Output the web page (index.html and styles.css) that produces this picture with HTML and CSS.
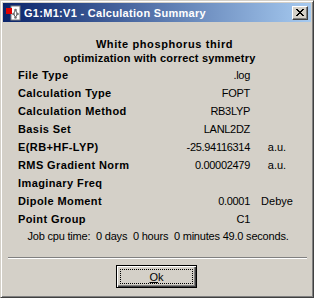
FILE: index.html
```html
<!DOCTYPE html>
<html lang="en">
<head>
  <meta charset="UTF-8" />
  <title>G1:M1:V1 - Calculation Summary</title>
  <link rel="stylesheet" href="styles.css">
</head>
<body>
  <div class="window">
    <div class="titlebar">
      <svg class="app-icon" width="16" height="16" viewBox="0 0 16 16">
        <rect x="6" y="1" width="9" height="14" fill="#fff" stroke="#808080" stroke-width="1"/>
        <rect x="1" y="3" width="6" height="6" fill="#e00000"/>
        <line x1="10.5" y1="5" x2="8.5" y2="9" stroke="#606060"/>
        <line x1="10.5" y1="5" x2="12.5" y2="9" stroke="#606060"/>
        <line x1="8.5" y1="9" x2="10.5" y2="12" stroke="#606060"/>
        <line x1="12.5" y1="9" x2="10.5" y2="12" stroke="#606060"/>
        <circle cx="10.5" cy="5" r="1.3" fill="#707070"/>
        <circle cx="8.5" cy="9" r="1.3" fill="#707070"/>
        <circle cx="12.5" cy="9" r="1.3" fill="#707070"/>
        <circle cx="10.5" cy="12.5" r="1.3" fill="#707070"/>
      </svg>
      <span class="title">G1:M1:V1 - Calculation Summary</span>
      <button class="close" aria-label="Close">
        <svg width="8" height="7" viewBox="0 0 8 7">
          <path d="M0 0h2v1h1v1h2v-1h1v-1h2v1h-1v1h-1v1h-1v1h1v1h1v1h1v1h-2v-1h-1v-1h-2v1h-1v1h-2v-1h1v-1h1v-1h1v-1h-1v-1h-1v-1h-1z" fill="#000"/>
        </svg>
      </button>
    </div>

    <div class="content">
      <h1 class="heading"><span class="first-line">White phosphorus third</span><br>optimization with correct symmetry</h1>

      <div class="summary">
        <div class="label">File Type</div><div class="value">.log</div><div class="unit"></div>
        <div class="label">Calculation Type</div><div class="value">FOPT</div><div class="unit"></div>
        <div class="label">Calculation Method</div><div class="value">RB3LYP</div><div class="unit"></div>
        <div class="label">Basis Set</div><div class="value">LANL2DZ</div><div class="unit"></div>
        <div class="label">E(RB+HF-LYP)</div><div class="value">-25.94116314</div><div class="unit">a.u.</div>
        <div class="label">RMS Gradient Norm</div><div class="value">0.00002479</div><div class="unit">a.u.</div>
        <div class="label">Imaginary Freq</div><div class="value"></div><div class="unit"></div>
        <div class="label">Dipole Moment</div><div class="value">0.0001</div><div class="unit">Debye</div>
        <div class="label">Point Group</div><div class="value">C1</div><div class="unit"></div>
      </div>

      <p class="cpu">Job cpu time:&nbsp; 0 days&nbsp; 0 hours&nbsp; 0 minutes 49.0 seconds.</p>

      <div class="separator"></div>

      <div class="actions">
        <button class="ok"><span class="focus"><u>O</u>k</span></button>
      </div>
    </div>
  </div>
</body>
</html>
```

FILE: styles.css
```css
* {
  margin: 0;
  padding: 0;
  box-sizing: border-box;
}

body {
  background: #d4d0c8;
  font-family: 'Liberation Sans', Arial, sans-serif;
  font-size: 11px;
  color: #000;
}

.window {
  width: 314px;
  height: 298px;
  background: #d4d0c8;
  border: 1px solid;
  border-color: #d4d0c8 #404040 #404040 #d4d0c8;
  box-shadow: inset 1px 1px #fff, inset -1px -1px #808080;
  padding: 2px;
}

.titlebar {
  height: 19px;
  display: flex;
  align-items: center;
  padding: 0 2px 0 2px;
  background: linear-gradient(90deg, #0a246a, #a6caf0);
}

.app-icon {
  flex: none;
  margin-right: 3px;
}

.title {
  flex: 1;
  color: #fff;
  font-weight: bold;
  font-size: 11px;
  letter-spacing: 0.3px;
  white-space: nowrap;
}

.close {
  width: 16px;
  height: 14px;
  display: flex;
  align-items: center;
  justify-content: center;
  background: #d4d0c8;
  border: 1px solid;
  border-color: #fff #404040 #404040 #fff;
  box-shadow: inset -1px -1px #808080;
  margin-right: 1px;
}

.content {
  padding: 15px 0 0 15px;
}

.heading {
  font-size: 11px;
  font-weight: bold;
  line-height: 14px;
  text-align: center;
  letter-spacing: 0.2px;
  margin: 0 0 1px -10px;
}

.first-line {
  display: inline-block;
  padding-left: 10px;
  letter-spacing: 0.6px;
}

.summary {
  display: grid;
  grid-template-columns: 140px 92px 54px;
  grid-auto-rows: 18px;
  align-items: center;
}

.label {
  font-weight: bold;
  letter-spacing: 0.4px;
}

.value {
  text-align: right;
  letter-spacing: -0.3px;
}

.unit {
  text-align: center;
}

.cpu {
  height: 16px;
  line-height: 16px;
  text-align: center;
  margin-left: -13px;
  letter-spacing: -0.2px;
}

.separator {
  margin: 13px 4px 0 -10px;
  height: 2px;
  border-top: 1px solid #808080;
  border-bottom: 1px solid #fff;
}

.actions {
  display: flex;
  justify-content: center;
  margin: 6px 0 0 -16px;
}

.ok {
  width: 81px;
  height: 23px;
  font-family: 'Liberation Sans', Arial, sans-serif;
  font-size: 11px;
  background: #d4d0c8;
  border: 1px solid #000;
  box-shadow: inset 1px 1px #fff, inset -1px -1px #404040, inset -2px -2px #808080;
  padding: 3px;
  display: flex;
}

.focus {
  flex: 1;
  display: flex;
  align-items: center;
  justify-content: center;
  border: 1px dotted #000;
}
```
